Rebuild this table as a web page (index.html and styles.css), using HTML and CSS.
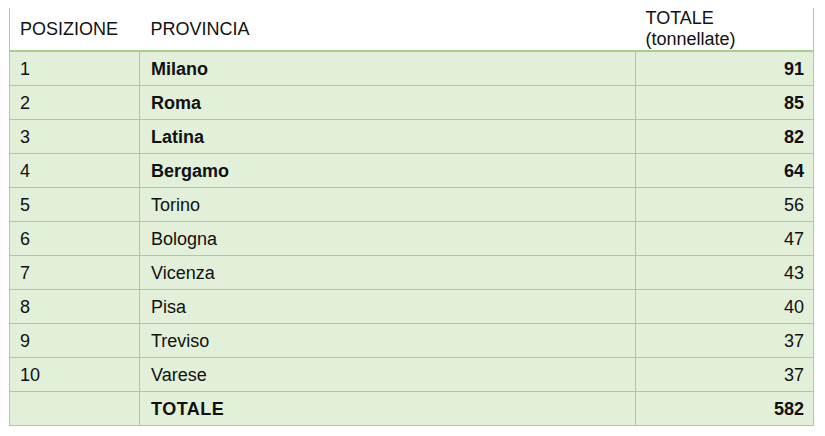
FILE: index.html
```html
<!DOCTYPE html>
<html lang="it">
<head>
<meta charset="utf-8">
<link rel="stylesheet" href="styles.css">
</head>
<body>
<table class="tbl">
  <colgroup><col class="c1"><col class="c2"><col class="c3"></colgroup>
  <thead>
    <tr class="head">
      <th class="pos">POSIZIONE</th>
      <th class="prov">PROVINCIA</th>
      <th class="tot">TOTALE<br>(tonnellate)</th>
    </tr>
  </thead>
  <tbody>
    <tr><td>1</td><td class="b">Milano</td><td class="num b">91</td></tr>
    <tr><td>2</td><td class="b">Roma</td><td class="num b">85</td></tr>
    <tr><td>3</td><td class="b">Latina</td><td class="num b">82</td></tr>
    <tr><td>4</td><td class="b">Bergamo</td><td class="num b">64</td></tr>
    <tr><td>5</td><td>Torino</td><td class="num">56</td></tr>
    <tr><td>6</td><td>Bologna</td><td class="num">47</td></tr>
    <tr><td>7</td><td>Vicenza</td><td class="num">43</td></tr>
    <tr><td>8</td><td>Pisa</td><td class="num">40</td></tr>
    <tr><td>9</td><td>Treviso</td><td class="num">37</td></tr>
    <tr><td>10</td><td>Varese</td><td class="num">37</td></tr>
    <tr><td></td><td class="b wide">TOTALE</td><td class="num b">582</td></tr>
  </tbody>
</table>
</body>
</html>
```
FILE: styles.css
```css
html, body {
  margin: 0;
  padding: 0;
  background: #ffffff;
}
body {
  font-family: "Liberation Sans", Arial, sans-serif;
  font-size: 18px;
  color: #111111;
}
.tbl {
  margin: 8px 0 0 9px;
  border-collapse: collapse;
  table-layout: fixed;
  width: 804px;
}
.c1 { width: 130px; }
.c2 { width: 496px; }
.c3 { width: 178px; }
.head th {
  height: 42px;
  padding: 0 10px;
  font-weight: normal;
  text-align: left;
  vertical-align: middle;
  border-bottom: 2px solid #a8d08d;
  background: #ffffff;
  line-height: 21px;
}
.head .pos { border-left: 1px solid #a8d08d; }
.head .tot { border-right: 1px solid #a8d08d; padding-left: 10px; }
.head .prov { padding-left: 11px; }
tbody td {
  height: 33px;
  padding: 0 9px 0 10px;
  border: 1px solid #a8d08d;
  background: #e2efd9;
  vertical-align: middle;
  line-height: 20px;
}
tbody td:nth-child(2) { padding-left: 11px; }
.b { font-weight: bold; }
.num { text-align: right; }
.wide { letter-spacing: 0.5px; }
```
